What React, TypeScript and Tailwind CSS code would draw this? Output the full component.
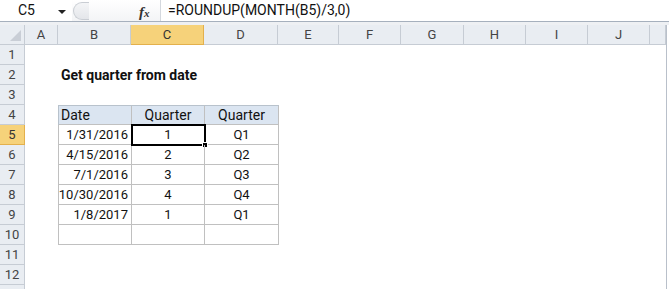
import React from 'react';

const cols = [
  { key: 'A', w: 33 },
  { key: 'B', w: 73 },
  { key: 'C', w: 73 },
  { key: 'D', w: 74 },
  { key: 'E', w: 61 },
  { key: 'F', w: 62 },
  { key: 'G', w: 63 },
  { key: 'H', w: 62 },
  { key: 'I', w: 62 },
  { key: 'J', w: 62 },
  { key: '', w: 16 },
];

const data: [string, string, string][] = [
  ['1/31/2016', '1', 'Q1'],
  ['4/15/2016', '2', 'Q2'],
  ['7/1/2016', '3', 'Q3'],
  ['10/30/2016', '4', 'Q4'],
  ['1/8/2017', '1', 'Q1'],
];

const font = { fontFamily: 'Roboto, "Noto Sans", sans-serif' };

function RowHead({ n, active }: { n?: number; active?: boolean }) {
  return (
    <div
      className={`w-[25px] h-[20px] shrink-0 flex items-center justify-center text-[13px] border-r border-b ${
        active
          ? 'bg-[#f6d27a] border-[#e3b04c] text-[#333]'
          : 'bg-[#e9edf2] border-[#c6ccd4] text-[#444]'
      }`}
    >
      {n}
    </div>
  );
}

// one sheet row: row header + content area
function Row({ n, active, children }: { n?: number; active?: boolean; children?: React.ReactNode }) {
  return (
    <div className="flex h-[20px]">
      <RowHead n={n} active={active} />
      <div className="flex-1 flex bg-white">{children}</div>
    </div>
  );
}

export default function App() {
  return (
    <div className="w-[669px] h-[289px] overflow-hidden bg-white text-[#111] relative" style={font}>
      {/* Formula bar */}
      <div className="flex h-[22px] border-b border-[#a6b0bd] bg-white">
        <div className="w-[72px] flex items-center pl-[18px] text-[14px] relative">
          C5
          <div className="absolute left-[58px] top-[10px] w-0 h-0 border-l-[4px] border-r-[4px] border-t-[4px] border-l-transparent border-r-transparent border-t-[#222]" />
        </div>
        <div className="w-[88px] flex items-center relative bg-gradient-to-b from-[#ffffff] to-[#f3f4f6]">
          <div className="ml-[1px] w-[16px] h-[18px] rounded-l-full border border-r-0 border-[#c9cdd3] bg-gradient-to-b from-[#f4f5f7] to-[#e4e6ea]" />
          <span
            className="absolute left-[67px] top-[1px] text-[15px] italic font-bold text-[#333]"
            style={{ fontFamily: '"Liberation Serif", serif' }}
          >
            f<span className="text-[11px]">x</span>
          </span>
        </div>
        <div className="flex-1 flex items-center pl-[7px] border-l border-[#d4d8de] text-[14px]">
          =ROUNDUP(MONTH(B5)/3,0)
        </div>
      </div>
      <div className="h-[3px] bg-[#eef0f3]" />

      {/* Column headers */}
      <div className="flex h-[20px]">
        <div className="w-[25px] shrink-0 bg-[#e9edf2] border-r border-b border-[#c6ccd4] relative">
          <div
            className="absolute right-[3px] bottom-[3px] w-0 h-0"
            style={{ borderBottom: '11px solid #c9ced6', borderLeft: '11px solid transparent' }}
          />
        </div>
        {cols.map((c) => (
          <div
            key={c.key || 'k'}
            style={{ width: c.w }}
            className={`shrink-0 flex items-center justify-center text-[13px] border-r border-b ${
              c.key === 'C'
                ? 'bg-[#f6d27a] border-[#e3b04c] text-[#333]'
                : 'bg-[#e9edf2] border-[#c6ccd4] text-[#444]'
            }`}
          >
            {c.key}
          </div>
        ))}
      </div>

      {/* Sheet rows */}
      <Row n={1} />
      <Row n={2}>
        <div className="ml-[36px] flex items-center text-[14px] font-bold">Get quarter from date</div>
      </Row>
      <Row n={3} />
      <Row n={4}>
        <div className="ml-[33px] flex bg-[#dbe5f1] border-t border-l border-[#b8c2cc] h-[20px]">
          <div className="w-[73px] border-r border-b border-[#c0c0c0] flex items-center pl-[2px] text-[14px]">Date</div>
          <div className="w-[73px] border-r border-b border-[#c0c0c0] flex items-center justify-center text-[14px]">Quarter</div>
          <div className="w-[74px] border-r border-b border-[#c0c0c0] flex items-center justify-center text-[14px]">Quarter</div>
        </div>
      </Row>
      {data.map(([d, q, qq], i) => (
        <Row key={i} n={5 + i} active={i === 0}>
          <div className="ml-[33px] flex border-l border-[#c0c0c0] h-[20px]">
            <div className="w-[73px] border-r border-b border-[#c0c0c0] flex items-center justify-end pr-[3px] text-[13px]">{d}</div>
            <div className="w-[73px] border-r border-b border-[#c0c0c0] flex items-center justify-center text-[13px] relative">
              {q}
              {i === 0 && (
                <div className="absolute -left-[1px] -top-[1px] w-[75px] h-[22px] border-2 border-black">
                  <div className="absolute -right-[4px] -bottom-[4px] w-[6px] h-[6px] bg-black border border-white" />
                </div>
              )}
            </div>
            <div className="w-[74px] border-r border-b border-[#c0c0c0] flex items-center justify-center text-[13px]">{qq}</div>
          </div>
        </Row>
      ))}
      <Row n={10}>
        <div className="ml-[33px] flex border-l border-[#c0c0c0] h-[20px]">
          <div className="w-[73px] border-r border-b border-[#c0c0c0]" />
          <div className="w-[73px] border-r border-b border-[#c0c0c0]" />
          <div className="w-[74px] border-r border-b border-[#c0c0c0]" />
        </div>
      </Row>
      <Row n={11} />
      <Row n={12} />
      <Row />

      {/* right edge of the sheet window */}
      <div className="absolute right-[2px] top-[25px] bottom-0 w-px bg-[#b9c0ca]" />
    </div>
  );
}
